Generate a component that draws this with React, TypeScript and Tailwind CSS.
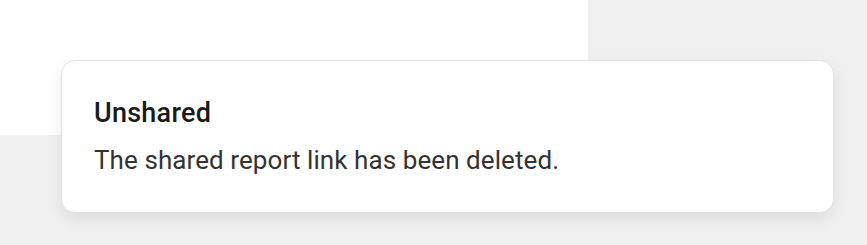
import React from "react";

export default function App() {
  return (
    <div
      className="relative w-[867px] h-[245px] overflow-hidden bg-[#f0f0f0]"
      style={{ fontFamily: "Roboto, 'Liberation Sans', sans-serif" }}
    >
      <div className="w-[588px] h-[135px] bg-white" />
      <div className="absolute left-[61px] top-[60px] w-[773px] h-[153px] rounded-[14px] border border-[#e3e3e3] bg-white pl-[32px] pt-[36px] shadow-[0_6px_16px_rgba(0,0,0,0.08)]">
        <div className="text-[27px] leading-[32px] font-medium tracking-[0.25px] text-[#1a1a1a]">
          Unshared
        </div>
        <div className="mt-[15px] text-[26px] leading-[32px] tracking-[0.08px] text-[#333333]">
          The shared report link has been deleted.
        </div>
      </div>
    </div>
  );
}
